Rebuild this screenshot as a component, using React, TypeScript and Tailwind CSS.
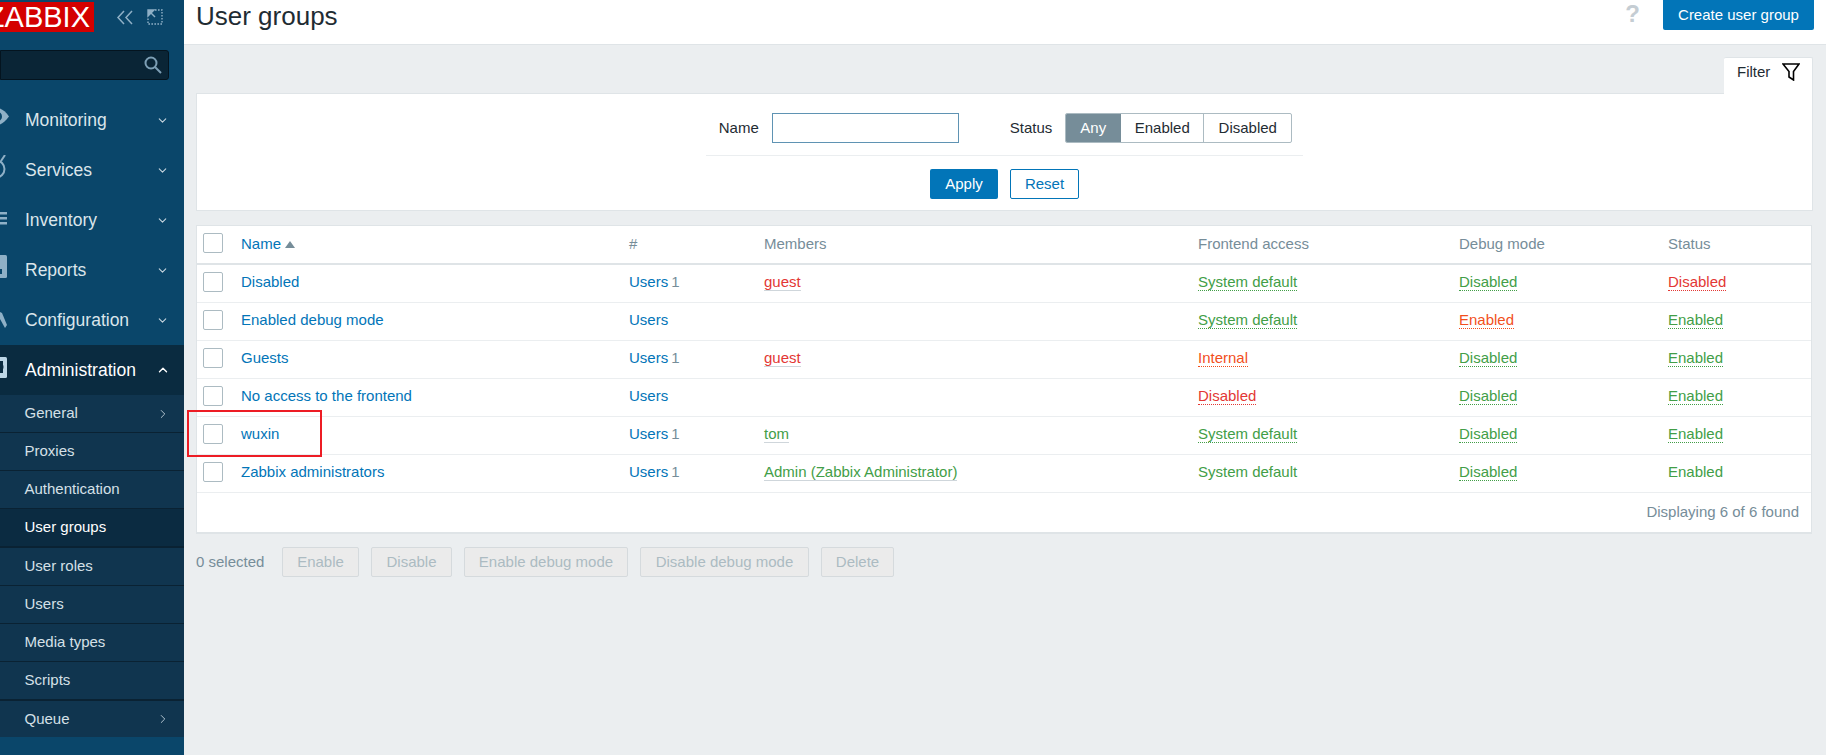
import { ChevronDown, ChevronRight, ChevronUp } from 'lucide-react';

const rowGrid = 'grid grid-cols-[44px_388px_135px_434px_261px_209px_1fr] items-center';

const dotted: Record<string, string> = {
  green: 'text-[#429e47] border-b border-dotted border-[#429e47]',
  red: 'text-[#e33734] border-b border-dotted border-[#e33734]',
  orange: 'text-[#f24f1d] border-b border-dotted border-[#f24f1d]',
};

const rows = [
  { name: 'Disabled', count: '1', member: 'guest', memberTone: 'text-[#e33734]', access: 'System default', accessTone: 'green', debug: 'Disabled', debugTone: 'green', status: 'Disabled', statusTone: 'red' },
  { name: 'Enabled debug mode', count: '', member: '', memberTone: '', access: 'System default', accessTone: 'green', debug: 'Enabled', debugTone: 'orange', status: 'Enabled', statusTone: 'green' },
  { name: 'Guests', count: '1', member: 'guest', memberTone: 'text-[#e33734]', access: 'Internal', accessTone: 'orange', debug: 'Disabled', debugTone: 'green', status: 'Enabled', statusTone: 'green' },
  { name: 'No access to the frontend', count: '', member: '', memberTone: '', access: 'Disabled', accessTone: 'red', debug: 'Disabled', debugTone: 'green', status: 'Enabled', statusTone: 'green' },
  { name: 'wuxin', count: '1', member: 'tom', memberTone: 'text-[#429e47]', access: 'System default', accessTone: 'green', debug: 'Disabled', debugTone: 'green', status: 'Enabled', statusTone: 'green' },
  { name: 'Zabbix administrators', count: '1', member: 'Admin (Zabbix Administrator)', memberTone: 'text-[#429e47]', access: 'System default', accessTone: 'plain', debug: 'Disabled', debugTone: 'green', status: 'Enabled', statusTone: 'plain' },
];

// the sidebar is cropped in the shot, so the nav icons only show their right edge
function NavIcon({ children, fill = '#8fb0c6' }: { children: React.ReactNode; fill?: string }) {
  return (
    <svg viewBox="0 0 20 30" className="w-[20px] h-[30px] -ml-[11px] mr-[16px] shrink-0" fill={fill}>
      {children}
    </svg>
  );
}

const mainNav = [
  {
    label: 'Monitoring',
    icon: (
      <NavIcon>
        <path d="M-4 11.5C0 6 4 3 8 3s8 3 12 8.5C16 17 12 20 8 20S0 17-4 11.5z" />
        <circle cx="8" cy="11.5" r="5" fill="#0a466a" />
      </NavIcon>
    ),
  },
  {
    label: 'Services',
    icon: (
      <NavIcon>
        <circle cx="7" cy="14" r="8.5" fill="none" stroke="#8fb0c6" strokeWidth="2" />
        <path d="M12 6l4-6" fill="none" stroke="#8fb0c6" strokeWidth="2" />
      </NavIcon>
    ),
  },
  {
    label: 'Inventory',
    icon: (
      <NavIcon>
        <rect x="8" y="7" width="10" height="2.5" />
        <rect x="8" y="12" width="10" height="2.5" />
        <rect x="8" y="17" width="10" height="2.5" />
      </NavIcon>
    ),
  },
  {
    label: 'Reports',
    icon: (
      <NavIcon>
        <path d="M5 0h11.5A1.5 1.5 0 0 1 18 1.5v20a1.5 1.5 0 0 1-1.5 1.5H5z" />
        <rect x="5" y="14" width="8" height="5" fill="#0a466a" />
      </NavIcon>
    ),
  },
  {
    label: 'Configuration',
    icon: (
      <NavIcon>
        <path d="M11 7l2 1 5 12-2 3-5-9z" />
      </NavIcon>
    ),
  },
];

const subNav = [
  { label: 'General', arrow: true, box: 'h-[38px] border-b' },
  { label: 'Proxies', box: 'h-[38px] border-b' },
  { label: 'Authentication', box: 'h-[38px] border-b' },
  { label: 'User groups', active: true, box: 'h-[39px] border-b-2' },
  { label: 'User roles', box: 'h-[38px] border-b' },
  { label: 'Users', box: 'h-[38px] border-b' },
  { label: 'Media types', box: 'h-[38px] border-b' },
  { label: 'Scripts', box: 'h-[39px] border-b-2' },
  { label: 'Queue', arrow: true, box: 'h-[36px]' },
];

function Sidebar() {
  return (
    <aside className="w-[184px] shrink-0 h-full bg-[#0a466a] overflow-hidden flex flex-col">
      <div className="h-[50px] pt-[2px] flex items-start">
        <div className="w-[94px] h-[30px] bg-[#d40000] text-white text-[29px] leading-[30px] overflow-hidden flex justify-end pr-[4px] whitespace-nowrap">
          ZABBIX
        </div>
        <svg viewBox="0 0 18 15" className="ml-[22px] mt-[8px] w-[18px] h-[15px]" fill="none" stroke="#8fb0c6" strokeWidth="1.5">
          <path d="M8 1L2 7.5 8 14M16 1L10 7.5 16 14" />
        </svg>
        <svg viewBox="0 0 16 16" className="ml-[13px] mt-[7px] w-[16px] h-[16px]" fill="none" stroke="#8fb0c6" strokeWidth="1.4">
          <path d="M8 1h7v14H1V8" strokeDasharray="1.6 1.4" />
          <path d="M1 1h6L1 7z" fill="#8fb0c6" />
          <path d="M3 3l5 5" />
        </svg>
      </div>
      <div className="w-[169px] h-[30px] shrink-0 bg-[#0a2536] border border-[#04141f] rounded-r-[3px] flex items-center justify-end pr-[6px]">
        <svg viewBox="0 0 18 18" className="w-[18px] h-[18px]" fill="none" stroke="#7d9fb5" strokeWidth="2">
          <circle cx="7" cy="7" r="5.5" />
          <path d="M11 11l6 6" />
        </svg>
      </div>
      <nav className="mt-[15px] text-[17.5px]">
        {mainNav.map((item) => (
          <div key={item.label} className="h-[50px] flex items-center text-[#dbe5eb]">
            {item.icon}
            <span className="flex-1">{item.label}</span>
            <ChevronDown className="mr-[15px] text-[#c6d5df]" size={13} strokeWidth={2} />
          </div>
        ))}
        <div className="h-[50px] flex items-center text-white bg-[#0a2b40]">
          <NavIcon fill="#bdd6e6">
            <path d="M5 2h11.5A1.5 1.5 0 0 1 18 3.5v18a1.5 1.5 0 0 1-1.5 1.5H5z" />
            <circle cx="11" cy="12" r="3.5" fill="#0a2b40" />
            <path d="M11 6h3v12h-3z" fill="#0a2b40" />
          </NavIcon>
          <span className="flex-1">Administration</span>
          <ChevronUp className="mr-[14px] text-white" size={14} strokeWidth={2.4} />
        </div>
      </nav>
      <ul className="bg-[#10354f] text-[15px]">
        {subNav.map((item) => (
          <li
            key={item.label}
            className={`${item.box} pl-[24.5px] flex items-center border-[#0a2233] ${item.active ? 'bg-[#0b2b41] text-white' : 'text-[#d5e0e7]'}`}
          >
            <span className="flex-1">{item.label}</span>
            {item.arrow && <ChevronRight className="mr-[14px] text-[#c6d5df]" size={14} strokeWidth={1.5} />}
          </li>
        ))}
      </ul>
    </aside>
  );
}

function FilterPanel() {
  return (
    <div>
      <div className="flex justify-end">
        <div className="w-[89px] h-[37px] -mb-px relative bg-white border border-[#dfe4e7] border-b-0 border-l-0 rounded-t-[2px] flex items-center pl-[13px] text-[#1f2c33]">
          <span className="mt-[-7px]">Filter</span>
          <svg viewBox="0 0 18 18" className="ml-[12px] mt-[-8px] w-[18px] h-[18px]" fill="none" stroke="#000" strokeWidth="1.6">
            <path d="M1 1h16l-5.5 7.5V17L7 14V8.5z" />
          </svg>
        </div>
      </div>
      <div className="h-[118px] bg-white border border-[#dfe4e7] flex flex-col items-center pt-[19px]">
        <div className="h-[30px] pl-[2px] flex items-center text-[#1f2c33]">
          <span className="mr-[13px]">Name</span>
          <div className="w-[187px] h-[30px] border border-[#5f93b3]" />
          <span className="ml-[51px] mr-[13px]">Status</span>
          <div className="h-[30px] flex rounded-[2px] border border-[#acbbc2] overflow-hidden">
            <span className="w-[56px] bg-[#768d99] text-white flex items-center justify-center -my-px -ml-px">Any</span>
            <span className="w-[83px] flex items-center justify-center border-r border-[#acbbc2]">Enabled</span>
            <span className="w-[87px] flex items-center justify-center">Disabled</span>
          </div>
        </div>
        <div className="w-[597px] h-px bg-[#ebeef0] mt-[12px]" />
        <div className="mt-[13px] flex gap-[12px]">
          <button className="w-[68px] h-[30px] bg-[#0275b8] text-white rounded-[2px]">Apply</button>
          <button className="w-[69px] h-[30px] bg-white border border-[#0275b8] text-[#0275b8] rounded-[2px]">Reset</button>
        </div>
      </div>
    </div>
  );
}

function Checkbox() {
  return <div className="w-[20px] h-[20px] ml-[6px] -mt-px bg-white border border-[#acbbc2] rounded-[2px]" />;
}

function Tag({ tone, children }: { tone: string; children: string }) {
  if (tone === 'plain') return <span className="text-[#429e47]">{children}</span>;
  return <span className={`inline-block leading-[16px] ${dotted[tone]}`}>{children}</span>;
}

function GroupsTable() {
  return (
    <div className="mt-[14px] mr-[1px] bg-white border border-[#dfe4e7] border-b-2">
      <div className={`${rowGrid} h-[39px] border-b-2 border-[#dfe4e7] text-[#768d99]`}>
        <div className="-mt-[3px]"><Checkbox /></div>
        <div className="flex items-center">
          <span className="text-[#0275b8]">Name</span>
          <span className="ml-[4px] w-0 h-0 border-x-[5px] border-x-transparent border-b-[7px] border-b-[#768d99]" />
        </div>
        <span>#</span>
        <span>Members</span>
        <span>Frontend access</span>
        <span>Debug mode</span>
        <span>Status</span>
      </div>
      {rows.map((row) => (
        <div key={row.name} className={`${rowGrid} h-[38px] pb-[2px] border-b border-[#ebeef0] relative`}>
          <Checkbox />
          <span className="text-[#0275b8]">{row.name}</span>
          <span>
            <span className="text-[#0275b8]">Users</span>
            {row.count && <span className="text-[#768d99] ml-[3px]">{row.count}</span>}
          </span>
          <span>
            {row.member && (
              <span className={`inline-block leading-[16px] border-b border-[#cfd6db] ${row.memberTone}`}>{row.member}</span>
            )}
          </span>
          <span><Tag tone={row.accessTone}>{row.access}</Tag></span>
          <span><Tag tone={row.debugTone}>{row.debug}</Tag></span>
          <span><Tag tone={row.statusTone}>{row.status}</Tag></span>
          {row.name === 'wuxin' && (
            <div className="absolute -left-[10px] -top-[7px] w-[135px] h-[47px] border-[2.5px] border-[#ed1c24]" />
          )}
        </div>
      ))}
      <div className="h-[39px] flex items-center justify-end pr-[12px] text-[#768d99]">Displaying 6 of 6 found</div>
    </div>
  );
}

const actions = [
  { label: 'Enable', w: 'w-[77px]' },
  { label: 'Disable', w: 'w-[81px]' },
  { label: 'Enable debug mode', w: 'w-[164px]' },
  { label: 'Disable debug mode', w: 'w-[169px]' },
  { label: 'Delete', w: 'w-[73px]' },
];

export default function App() {
  return (
    <div className="h-screen flex overflow-hidden font-['Liberation_Sans',Arial,sans-serif] text-[15px] bg-[#ebeef0]">
      <Sidebar />
      <main className="flex-1 min-w-0">
        <header className="h-[45px] bg-white border-b border-[#dfe4e7] flex items-start pl-[12px] pr-[12px]">
          <h1 className="text-[26px] leading-[32px] text-[#1f2c33] flex-1">User groups</h1>
          <span className="text-[24px] leading-[28px] font-bold text-[#c5cdd3] mr-[23px]">?</span>
          <button className="w-[151px] h-[30px] bg-[#0275b8] text-white rounded-b-[2px] text-[15px]">Create user group</button>
        </header>
        <div className="pl-[12px] pr-[13px] pt-[12px]">
          <FilterPanel />
          <GroupsTable />
          <div className="mt-[13px] flex items-center gap-[12px] text-[#acbbc2]">
            <span className="w-[74px] text-[#768d99]">0 selected</span>
            {actions.map((action) => (
              <button
                key={action.label}
                className={`${action.w} h-[30px] bg-[#ebebeb] border border-[#d5dadd] rounded-[2px]`}
              >
                {action.label}
              </button>
            ))}
          </div>
        </div>
      </main>
    </div>
  );
}
